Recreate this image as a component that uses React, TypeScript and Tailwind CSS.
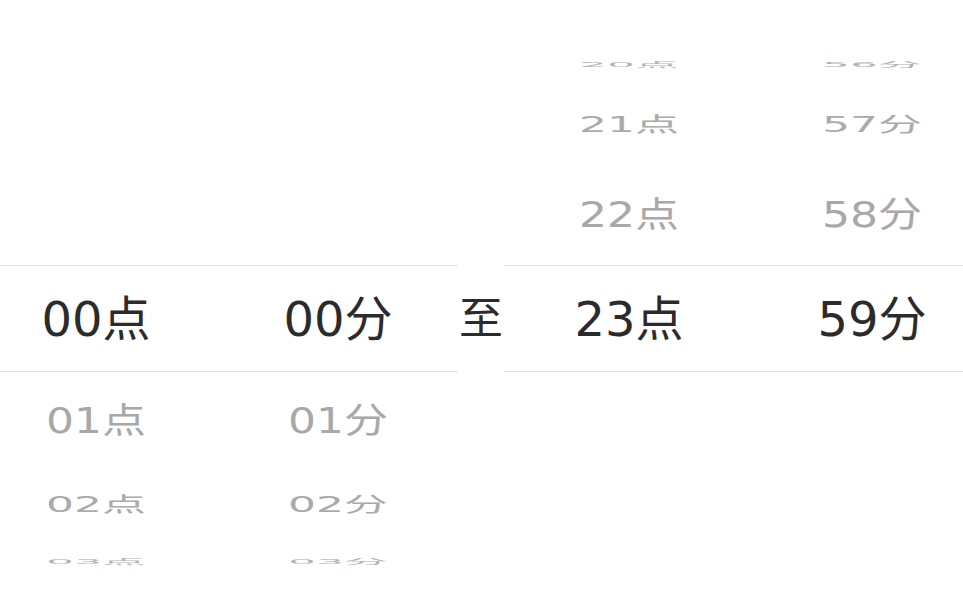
import React from "react";

type Slot = { off: number; h: string; scale: string; tone: string };

// wheel slots, top to bottom: height of each slot and how flat the text is drawn
const slots: Slot[] = [
  { off: -3, h: "h-[44px]", scale: "scale-y-[0.15]", tone: "text-[#b4b4b4]" },
  { off: -2, h: "h-[76px]", scale: "scale-y-[0.47]", tone: "text-[#aaaaaa]" },
  { off: -1, h: "h-[103px]", scale: "scale-y-[0.79]", tone: "text-[#a8a8a8]" },
  { off: 0, h: "h-[105px]", scale: "", tone: "text-[#2b2b2b]" },
  { off: 1, h: "h-[100px]", scale: "scale-y-[0.79]", tone: "text-[#a8a8a8]" },
  { off: 2, h: "h-[68px]", scale: "scale-y-[0.47]", tone: "text-[#aaaaaa]" },
  { off: 3, h: "h-[46px]", scale: "scale-y-[0.15]", tone: "text-[#b4b4b4]" },
];

const pad = (n: number) => (n < 10 ? `0${n}` : `${n}`);

function Wheel({ value, max, unit, className }: { value: number; max: number; unit: string; className: string }) {
  return (
    <div className={`flex flex-col pt-[43px] ${className}`}>
      {slots.map((s) => {
        const v = value + s.off;
        const show = v >= 0 && v <= max;
        return (
          <div key={s.off} className={`${s.h} flex items-center justify-center`}>
            {show && (
              <span
                className={`${s.tone} ${s.scale} whitespace-nowrap leading-none ${
                  s.off === 0 ? "text-[48px]" : "text-[44px]"
                }`}
              >
                {pad(v)}
                {unit}
              </span>
            )}
          </div>
        );
      })}
    </div>
  );
}

function Pair({ hour, minute, left }: { hour: number; minute: number; left: boolean }) {
  return (
    <div className={`relative flex h-[600px] ${left ? "w-[458px]" : "w-[459px]"}`}>
      <div className="pointer-events-none absolute inset-x-0 top-[265px] h-[107px] border-y border-[#e2e2e2]" />
      <Wheel value={hour} max={23} unit="点" className={left ? "ml-[6px] w-[180px]" : "ml-[35px] w-[180px]"} />
      <Wheel value={minute} max={59} unit="分" className={left ? "ml-[62px] w-[180px]" : "ml-[63px] w-[180px]"} />
    </div>
  );
}

export default function App() {
  return (
    <div
      className="flex h-[600px] w-[963px] overflow-hidden bg-white"
      style={{ fontFamily: '"DejaVu Sans", "Noto Sans CJK SC", sans-serif' }}
    >
      <Pair hour={0} minute={0} left />
      <div className="flex w-[46px] items-center justify-center pt-[38px] text-[44px] leading-none text-[#2b2b2b]">至</div>
      <Pair hour={23} minute={59} left={false} />
    </div>
  );
}
